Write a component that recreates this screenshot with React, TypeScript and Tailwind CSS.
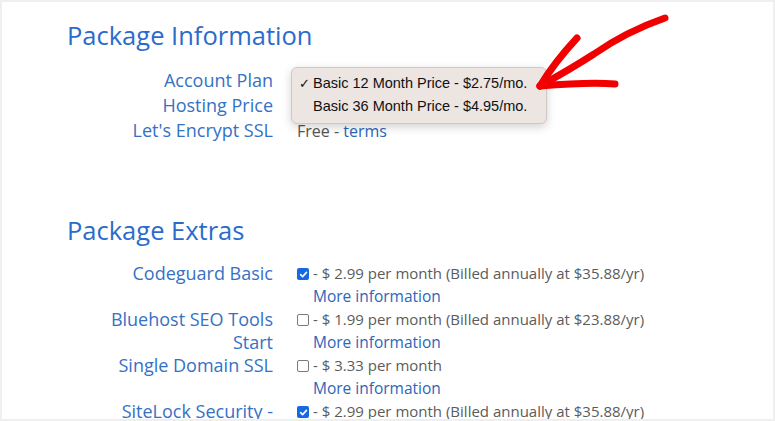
import React from 'react';

const infoRows = [
  { label: 'Account Plan', value: null },
  { label: 'Hosting Price', value: null },
  { label: "Let's Encrypt SSL", value: 'ssl' },
];

const extras = [
  { label: 'Codeguard Basic', checked: true, price: '- $ 2.99 per month (Billed annually at $35.88/yr)' },
  { label: 'Bluehost SEO Tools Start', checked: false, price: '- $ 1.99 per month (Billed annually at $23.88/yr)' },
  { label: 'Single Domain SSL', checked: false, price: '- $ 3.33 per month' },
  { label: 'SiteLock Security - Find', checked: true, price: '- $ 2.99 per month (Billed annually at $35.88/yr)' },
];

const Checkbox = ({ checked }: { checked: boolean }) =>
  checked ? (
    <span className="inline-flex items-center justify-center w-[12px] h-[12px] rounded-[2px] bg-[#1769e0] mr-[4px] mb-[1px] align-middle">
      <svg width="9" height="9" viewBox="0 0 10 10" fill="none">
        <path d="M1.8 5.2 L4 7.4 L8.3 2.6" stroke="white" strokeWidth="1.8" strokeLinecap="round" strokeLinejoin="round" />
      </svg>
    </span>
  ) : (
    <span className="inline-block w-[12px] h-[12px] rounded-[2px] border border-[#7a7a7a] bg-white mr-[4px] mb-[1px] align-middle" />
  );

export default function App() {
  return (
    <div
      className="relative w-[775px] h-[421px] overflow-hidden bg-white border-2 border-[#efefef]"
      style={{ fontFamily: '"Open Sans", sans-serif' }}
    >
      <div className="pl-[65px] pt-[13px]">
        <h2 className="text-[25.5px] leading-[40px] text-[#2b6bcb]">Package Information</h2>

        <div className="mt-[13px] flex flex-col">
          {infoRows.map((row) => (
            <div key={row.label} className="flex items-baseline leading-[25px]">
              <div className="w-[206px] text-right text-[18px] text-[#3571c5]">{row.label}</div>
              <div className="pl-[24px] text-[16px] text-[#555]">
                {row.value === 'ssl' && (
                  <>
                    Free - <span className="text-[#2c66b8]">terms</span>
                  </>
                )}
              </div>
            </div>
          ))}
        </div>

        <h2 className="mt-[66px] text-[25.5px] leading-[40px] text-[#2b6bcb]">Package Extras</h2>

        <div className="mt-[12px] flex flex-col">
          {extras.map((item) => (
            <div key={item.label} className="flex items-start leading-[23px]">
              <div className="w-[206px] pl-[30px] text-right text-[18px] text-[#3571c5]">{item.label}</div>
              <div className="pl-[24px] text-[15px] text-[#5b5b5b]">
                <div>
                  <Checkbox checked={item.checked} />
                  {item.price}
                </div>
                <div className="pl-[16px] text-[15.5px] text-[#2c66b8]">More information</div>
              </div>
            </div>
          ))}
        </div>
      </div>

      {/* open plan select menu */}
      <div
        className="absolute left-[289px] top-[65px] w-[256px] h-[57px] rounded-[6px] bg-[#ece5e2] border border-[#cfc8c6] shadow-[0_3px_10px_rgba(0,0,0,0.18)] pt-[4px] text-[14.5px] leading-[23px] text-[#111]"
        style={{ fontFamily: '"Liberation Sans", Arial, sans-serif' }}
      >
        <div className="flex">
          <span className="w-[21px] pl-[7px] text-[13px]" style={{ fontFamily: '"DejaVu Sans", sans-serif' }}>✓</span>
          <span>Basic 12 Month Price - $2.75/mo.</span>
        </div>
        <div className="flex">
          <span className="w-[21px]" />
          <span>Basic 36 Month Price - $4.95/mo.</span>
        </div>
      </div>

      {/* hand drawn arrow */}
      <svg className="absolute left-0 top-0 pointer-events-none" width="775" height="421">
        <g fill="none" stroke="#f20000" strokeWidth="7" strokeLinecap="round" strokeLinejoin="round">
          <path d="M663 16 C640 24 615 36 592 52 C575 63 556 74 538 84" />
          <path d="M575 36 C562 50 549 66 538 84" />
          <path d="M538 84 C562 82 590 80 613 82" />
        </g>
      </svg>
    </div>
  );
}
